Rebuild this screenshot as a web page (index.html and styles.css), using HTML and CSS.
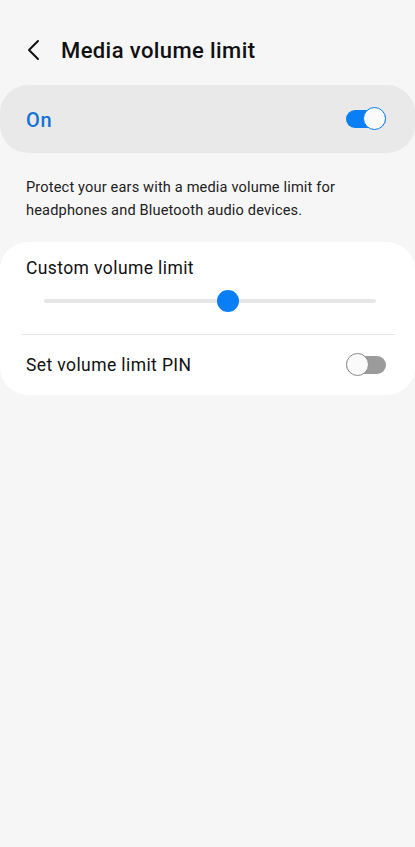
FILE: index.html
```html
<!doctype html>
<html>

<head>
    <meta charset="utf-8">
    <title>Media volume limit</title>
    <link rel="stylesheet" href="styles.css">
</head>

<body>
    <div class="header">
        <span class="back">
            <svg width="14" height="22" viewBox="0 0 14 22">
                <path d="M11 2 L2 11 L11 20" fill="none" stroke="#111" stroke-width="2" stroke-linecap="round" stroke-linejoin="round"/>
            </svg>
        </span>
        <h1 class="title">Media volume limit</h1>
    </div>

    <div class="master">
        <span class="master-label">On</span>
        <span class="switch on"><span class="knob"></span></span>
    </div>

    <p class="desc">Protect your ears with a media volume limit for headphones and Bluetooth audio devices.</p>

    <div class="card">
        <div class="row slider-row">
            <div class="row-title">Custom volume limit</div>
            <div class="slider">
                <div class="track"></div>
                <div class="thumb" style="left: 55.5%"></div>
            </div>
        </div>
        <div class="divider"></div>
        <div class="row">
            <div class="row-title">Set volume limit PIN</div>
            <span class="switch"><span class="knob"></span></span>
        </div>
    </div>
</body>

</html>
```

FILE: styles.css
```css
body {
    margin: 0;
    background: #f6f6f6;
    font-family: Roboto, "Noto Sans", sans-serif;
    color: #111;
}

.header {
    display: flex;
    align-items: center;
    height: 100px;
    padding: 0 0 0 27px;
    box-sizing: border-box;
}

.back {
    display: flex;
    width: 34px;
}

.title {
    margin: 0;
    font-size: 22px;
    font-weight: 500;
    letter-spacing: 0.4px;
}

/* 主开关卡片 */
.master {
    display: flex;
    align-items: center;
    justify-content: space-between;
    height: 68px;
    margin-top: -15px;
    padding: 0 29px 0 26px;
    background: #e9e9e9;
    border-radius: 28px;
}

.master-label {
    font-size: 20px;
    font-weight: 500;
    letter-spacing: 0.6px;
    color: #1472d6;
    padding-top: 2px;
}

.switch {
    position: relative;
    display: inline-block;
    width: 40px;
    height: 18px;
    border-radius: 9px;
    background: #9b9b9b;
}

.switch .knob {
    position: absolute;
    top: -3px;
    left: 0;
    width: 23px;
    height: 23px;
    border-radius: 50%;
    background: #fafafa;
    border: 1.5px solid #8a8a8a;
    box-sizing: border-box;
}

.switch.on {
    background: #0a7ff5;
}

.switch.on .knob {
    left: auto;
    right: 0;
    border-color: #0a7ff5;
}

.desc {
    margin: 23px 0 0;
    padding: 0 20px 0 26px;
    font-size: 14.6px;
    line-height: 23px;
    letter-spacing: 0.15px;
    color: #222;
}

/* 设置项卡片 */
.card {
    margin-top: 20px;
    background: #fff;
    border-radius: 28px;
}

.row {
    display: flex;
    align-items: center;
    justify-content: space-between;
    padding: 0 29px 0 26px;
    height: 60px;
}

.row-title {
    font-size: 17.5px;
    letter-spacing: 0.4px;
}

.slider-row {
    display: block;
    height: auto;
    padding-top: 16px;
    padding-bottom: 22px;
}

.slider {
    position: relative;
    height: 22px;
    margin: 12px 10px 0 18px;
}

.slider .track {
    position: absolute;
    left: 0;
    right: 0;
    top: 9px;
    height: 4px;
    border-radius: 2px;
    background: #e6e6e6;
}

.slider .thumb {
    position: absolute;
    top: 0;
    width: 22px;
    height: 22px;
    margin-left: -11px;
    border-radius: 50%;
    background: #0a7ff5;
}

.divider {
    height: 1px;
    margin: 0 20px 0 22px;
    background: #e6e6e6;
}
```
